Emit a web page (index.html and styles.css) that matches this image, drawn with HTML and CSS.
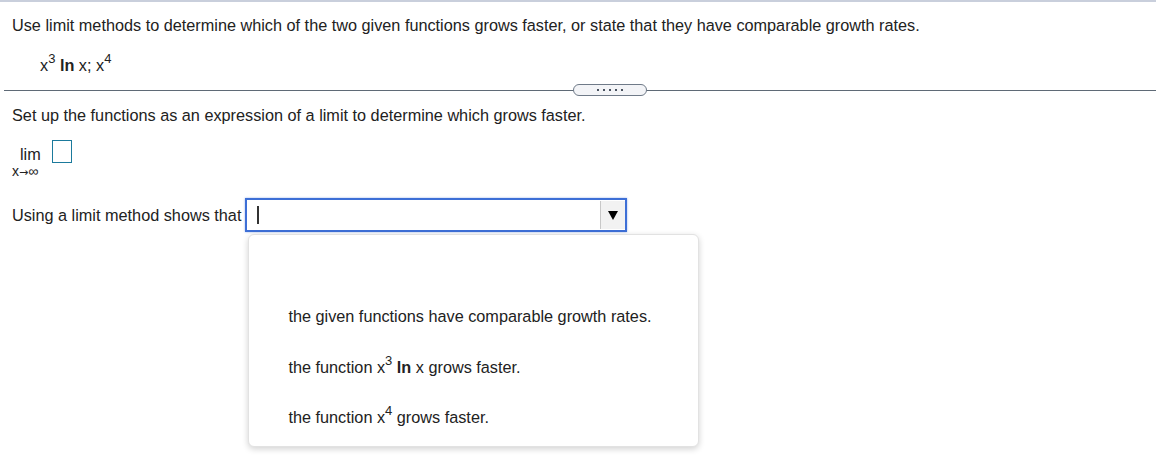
FILE: index.html
```html
<!DOCTYPE html>
<html>
<head>
<meta charset="utf-8">
<link rel="stylesheet" href="styles.css">
</head>
<body>
<div class="page">
  <p class="question">Use limit methods to determine which of the two given functions grows faster, or state that they have comparable growth rates.</p>
  <p class="funcs">x<sup>3</sup> <b>ln</b> x; x<sup>4</sup></p>
  <div class="divider">
    <span class="line"></span>
    <span class="pill"><i></i><i></i><i></i><i></i><i></i></span>
  </div>
  <p class="setup">Set up the functions as an expression of a limit to determine which grows faster.</p>
  <div class="limit">
    <div class="limrow"><span class="lim">lim</span><span class="box"></span></div>
    <div class="sub">x<span class="arr">→</span>∞</div>
  </div>
  <div class="using">
    <span class="label">Using a limit method shows that</span>
    <div class="selectwrap">
      <div class="select">
        <span class="caret"></span>
        <span class="arrow"><svg width="12" height="12" viewBox="0 0 12 12"><path d="M1 2 L11 2 L6 11 Z" fill="#000"/></svg></span>
      </div>
      <div class="menu">
        <div class="opt">the given functions have comparable growth rates.</div>
        <div class="opt">the function x<sup>3</sup> <b>ln</b> x grows faster.</div>
        <div class="opt">the function x<sup>4</sup> grows faster.</div>
      </div>
    </div>
  </div>
</div>
</body>
</html>
```

FILE: styles.css
```css
html, body {
  margin: 0;
  padding: 0;
  background: #fff;
}
body {
  font-family: "Liberation Sans", Arial, sans-serif;
  font-size: 16.25px;
  color: #222;
  border-top: 2px solid #c9cfdc;
  min-height: 469px;
}
.page {
  position: relative;
  min-height: 469px;
}
p { margin: 0; }
.question {
  padding: 14px 0 0 12px;
  line-height: 18px;
}
.funcs {
  padding: 22px 0 0 40px;
  line-height: 18px;
}
sup {
  font-size: 13px;
  line-height: 0;
  vertical-align: 8px;
}
.funcs b, .opt b { font-weight: bold; }
.divider {
  position: relative;
  margin: 10px 0 0 4px;
  height: 12px;
  display: flex;
  align-items: center;
}
.line {
  flex: 1;
  height: 1px;
  background: #5f6a76;
}
.pill {
  position: absolute;
  left: 569px;
  top: 0;
  width: 72px;
  height: 10px;
  border: 1px solid #6f7a88;
  border-radius: 6px;
  background: #f3f4f7;
  display: flex;
  align-items: center;
  justify-content: center;
  gap: 4px;
}
.pill i {
  display: block;
  width: 2px;
  height: 2px;
  background: #4a5360;
}
.setup {
  padding: 10px 0 0 12px;
  line-height: 18px;
}
.limit {
  padding: 16px 0 0 12px;
}
.limrow {
  display: flex;
  align-items: flex-start;
}
.lim {
  margin-left: 8px;
  margin-top: 6px;
  line-height: 16px;
}
.box {
  margin-left: 11px;
  width: 18px;
  height: 21px;
  border: 1px solid #1b7a9c;
}
.sub {
  font-size: 14px;
  line-height: 14px;
  margin-top: 1px;
}
.arr {
  font-family: "DejaVu Sans", sans-serif;
  font-size: 11px;
}
.using {
  display: flex;
  align-items: flex-start;
  padding: 18px 0 0 12px;
}
.label {
  margin-top: 9px;
  line-height: 16px;
}
.selectwrap {
  position: relative;
  margin-left: 4px;
}
.select {
  width: 378px;
  height: 30px;
  border: 2px solid #3d6fd6;
  box-shadow: 0 0 2px #9bb4ea;
  display: flex;
  align-items: center;
  justify-content: space-between;
}
.caret {
  margin-left: 10px;
  width: 2px;
  height: 18px;
  background: #333;
}
.arrow {
  width: 24px;
  height: 28px;
  background: #f2f2f2;
  border-left: 1px solid #c8c8c8;
  display: flex;
  align-items: center;
  justify-content: center;
}
.menu {
  position: absolute;
  left: 3px;
  top: 36px;
  width: 451px;
  height: 213px;
  box-sizing: border-box;
  background: #fff;
  border: 1px solid #e2e2e2;
  border-radius: 6px;
  box-shadow: 0 2px 6px rgba(0,0,0,0.18);
  padding: 72px 0 0 39px;
  z-index: 2;
}
.opt {
  height: 50.5px;
  line-height: 18px;
  color: #222;
}
```
